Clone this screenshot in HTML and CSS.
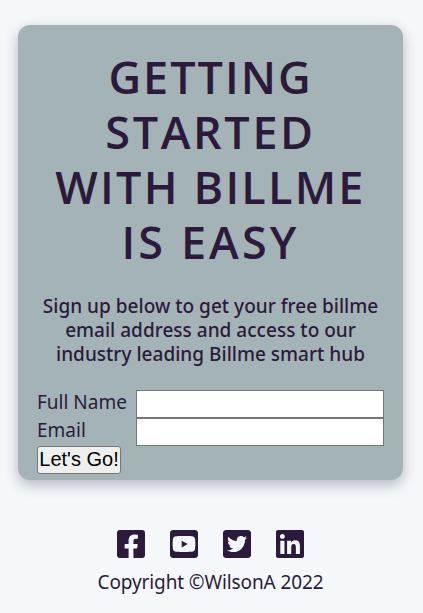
FILE: index.html
```html
<!DOCTYPE html>
<html lang="en">
<head>
<meta charset="utf-8">
<meta name="viewport" content="width=device-width, initial-scale=1">
<title>Billme</title>
<link rel="stylesheet" href="styles.css">
</head>
<body>
<main class="card">
  <h1 class="title"><span class="t1">GETTING</span><span class="t2">STARTED</span><span class="t3">WITH BILLME</span><span class="t4">IS EASY</span></h1>
  <p class="intro"><span>Sign up below to get your free billme</span><span>email address and access to our</span><span>industry leading Billme smart hub</span></p>
  <form class="form">
    <label class="label" for="name">Full Name</label><input class="field" id="name" type="text">
    <label class="label" for="email">Email</label><input class="field" id="email" type="email">
    <button class="submit" type="button">Let's Go!</button>
  </form>
</main>
<footer class="footer">
  <div class="social">
    <svg class="icon" viewBox="0 32 448 448"><path d="M400 32H48A48 48 0 0 0 0 80v352a48 48 0 0 0 48 48h137.25V327.69h-63V256h63v-54.64c0-62.15 37-96.48 93.67-96.48 27.14 0 55.52 4.84 55.52 4.84v61h-31.27c-30.81 0-40.42 19.12-40.42 38.73V256h68.78l-11 71.69h-57.78V480H400a48 48 0 0 0 48-48V80a48 48 0 0 0-48-48z"/></svg>
    <svg class="icon" viewBox="0 32 448 448"><path d="M186.8 202.1l95.2 54.1-95.2 54.1V202.1zM448 80v352c0 26.5-21.5 48-48 48H48c-26.5 0-48-21.5-48-48V80c0-26.5 21.5-48 48-48h352c26.5 0 48 21.5 48 48zm-42 176.3s0-59.6-7.6-88.2c-4.2-15.8-16.5-28.2-32.2-32.4C337.9 128 224 128 224 128s-113.9 0-142.2 7.7c-15.7 4.2-28 16.6-32.2 32.4-7.6 28.5-7.6 88.2-7.6 88.2s0 59.6 7.6 88.2c4.2 15.8 16.5 27.7 32.2 31.9C110.1 384 224 384 224 384s113.9 0 142.2-7.7c15.7-4.2 28-16.1 32.2-31.9 7.6-28.5 7.6-88.1 7.6-88.1z"/></svg>
    <svg class="icon" viewBox="0 32 448 448"><path d="M400 32H48C21.5 32 0 53.5 0 80v352c0 26.5 21.5 48 48 48h352c26.5 0 48-21.5 48-48V80c0-26.5-21.5-48-48-48zm-48.9 158.8c.2 2.8.2 5.7.2 8.5 0 86.7-66 186.6-186.6 186.6-37.2 0-71.7-10.8-100.7-29.4 5.3.6 10.4.8 15.8.8 30.7 0 58.9-10.4 81.4-28-28.8-.6-53-19.5-61.3-45.5 10.1 1.5 19.2 1.5 29.6-1.2-30-6.1-52.5-32.5-52.5-64.4v-.8c8.7 4.9 18.9 7.9 29.6 8.3a65.447 65.447 0 0 1-29.2-54.6c0-12.2 3.2-23.4 8.9-33.1 32.3 39.8 80.8 65.8 135.2 68.6-9.3-44.5 24-80.6 64-80.6 18.9 0 35.9 7.9 47.9 20.7 14.8-2.8 29-8.3 41.6-15.8-4.9 15.2-15.2 28-28.8 36.1 13.2-1.4 26-5.1 37.8-10.2-8.9 13.1-20.1 24.7-32.9 34z"/></svg>
    <svg class="icon" viewBox="0 32 448 448"><path d="M416 32H31.9C14.3 32 0 46.5 0 64.3v383.4C0 465.5 14.3 480 31.9 480H416c17.6 0 32-14.5 32-32.3V64.3c0-17.8-14.4-32.3-32-32.3zM135.4 416H69V202.2h66.5V416zm-33.2-243c-21.3 0-38.5-17.3-38.5-38.5S80.9 96 102.2 96c21.2 0 38.5 17.3 38.5 38.5 0 21.3-17.2 38.5-38.5 38.5zm282.1 243h-66.4V312c0-24.8-.5-56.7-34.5-56.7-34.6 0-39.9 27-39.9 54.9V416h-66.4V202.2h63.7v29.2h.9c8.9-16.8 30.6-34.5 62.2-34.5 66.5 0 78.9 43.8 78.9 100.9V416z"/></svg>
  </div>
  <p class="copyright">Copyright ©WilsonA 2022</p>
</footer>
</body>
</html>
```
FILE: styles.css
```css
* { box-sizing: border-box; }
body {
  margin: 0;
  padding: 25px 20px 0 18px;
  background: #f4f8fb;
  color: #2c1a3d;
  font-family: "Noto Sans", sans-serif;
}
.card {
  height: 455px;
  padding: 24px 19px 0;
  border-radius: 12px;
  background: #a4b3b6;
  box-shadow: 0 5px 14px rgba(44, 26, 61, 0.3);
}
.title {
  margin: 0;
  font-family: "Open Sans", sans-serif;
  font-size: 45px;
  font-weight: 600;
  line-height: 55px;
  text-align: center;
  white-space: nowrap;
}
.title span, .intro span { display: block; }
.t1 { letter-spacing: 2px; }
.t2 { letter-spacing: 2.6px; }
.t3 { letter-spacing: 2.2px; }
.t4 { letter-spacing: 3.1px; }
.intro {
  margin: 25px 0 24px;
  font-size: 19px;
  font-weight: 500;
  line-height: 24px;
  letter-spacing: 0.02px;
  text-align: center;
  white-space: nowrap;
}
.form {
  display: grid;
  grid-template-columns: 99px 248px;
  grid-auto-rows: 28px;
}
.label, .copyright {
  font-size: 19px;
  font-weight: 400;
  line-height: 24px;
}
.field {
  width: 248px;
  height: 28px;
  border: 1px solid #767676;
  border-radius: 0;
  background: #fff;
}
.submit {
  width: 84px;
  height: 28px;
  padding: 0 0 2px;
  border: 1px solid #767676;
  border-radius: 3px;
  background: #efefef;
  color: #000;
  font: 20px/24px "Liberation Sans", sans-serif;
}
.footer { padding-top: 50px; }
.social {
  display: flex;
  gap: 24.85px;
  padding-left: 99.3px;
}
.icon {
  width: 28px;
  height: 28px;
  fill: #2c1a3d;
}
.copyright {
  margin: 12px 0 0;
  letter-spacing: -0.12px;
  text-align: center;
  white-space: nowrap;
}
```
